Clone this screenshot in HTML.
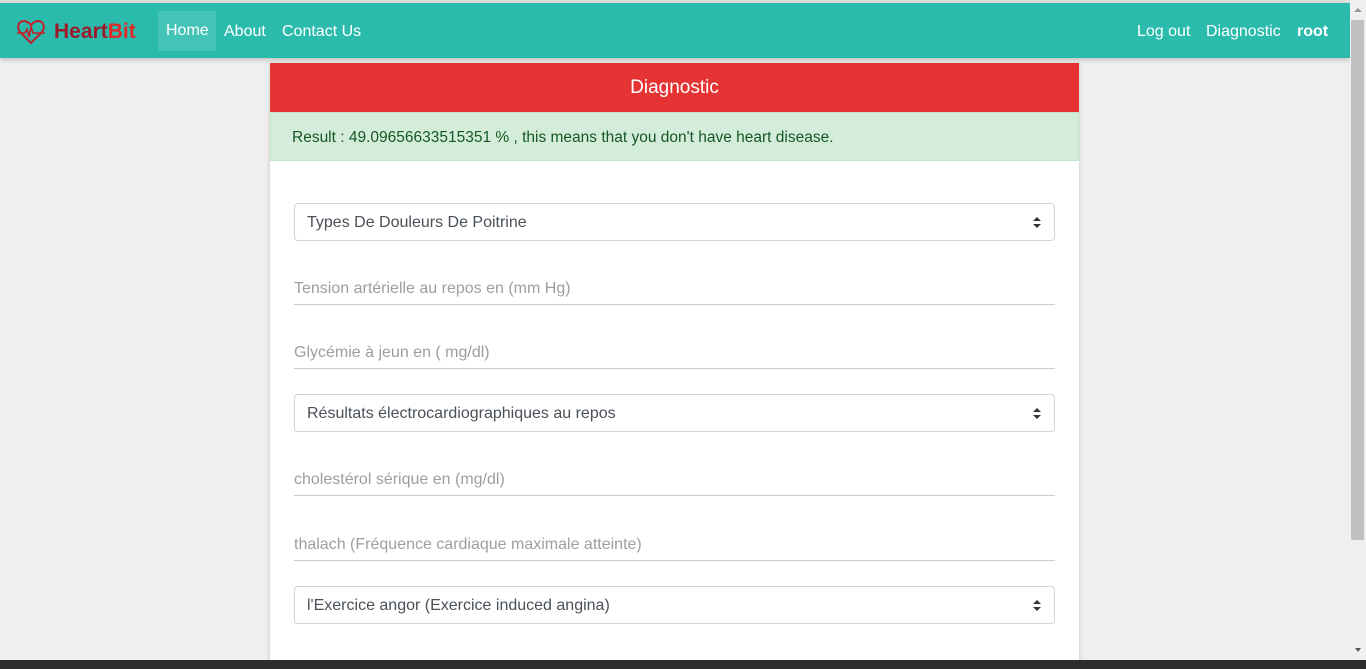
<!DOCTYPE html>
<html><head><meta charset="utf-8">
<style>
*{box-sizing:border-box;margin:0;padding:0}
body{width:1366px;height:669px;overflow:hidden;background:#efefef;font-family:"Liberation Sans",sans-serif;position:relative}
.top{position:absolute;left:0;top:0;width:1350px;height:3px;background:#e0e0e0}
.nav{position:absolute;left:0;top:3px;width:1350px;height:55px;background:#2bbbad;box-shadow:0 2px 5px rgba(0,0,0,.2);color:#fff;font-size:16px}
.nav .brand{position:absolute;left:16px;top:16px;display:flex;align-items:center;color:#9b1b2a;font-weight:bold;font-size:21px}
.nav a{position:absolute;top:1px;height:55px;line-height:55px;color:#fff}
.home{left:158px;width:58px;top:8px!important;height:40px!important;line-height:40px!important;background:rgba(255,255,255,.12);padding-left:8px}
.sb{position:absolute;left:1350px;top:0;width:16px;height:660px;background:#f0f0f0}
.thumb{position:absolute;left:1351px;top:20px;width:13px;height:520px;background:#c1c1c1}
.task{position:absolute;left:0;top:660px;width:1366px;height:9px;background:#2d2d2d}
.card{position:absolute;left:270px;top:63px;width:809px;height:600px;background:#fff;box-shadow:0 2px 5px rgba(0,0,0,.16)}
.head{height:49px;background:#e53334;color:#fff;text-align:center;font-size:19px;line-height:50px}
.res{height:49px;background:#d4edda;border:1px solid #c3e6cb;color:#155724;font-size:15.5px;line-height:49px;padding-left:21px}
.sel{position:absolute;left:24px;width:761px;height:38px;border:1px solid #ced4da;border-radius:4px;font-size:16px;color:#495057;line-height:37px;padding-left:12px}
.sel:after{content:"";position:absolute;right:13px;top:13px;border:4px solid transparent;border-bottom:4px solid #333;border-top:0}
.sel:before{content:"";position:absolute;right:13px;top:20px;border:4px solid transparent;border-top:4px solid #333;border-bottom:0}
.inp{position:absolute;left:24px;width:761px;height:30px;border-bottom:1px solid #ccc;font-size:16px;color:#9e9e9e;padding-top:5px}
</style></head><body>
<div class="top"></div>
<div class="nav">
 <div class="brand"><svg width="30" height="26" viewBox="0 0 30 26"><path d="M15 24 L5 14 C0 9 2 2 8 2 C11 2 13 4 15 6 C17 4 19 2 22 2 C28 2 30 9 25 14 Z" fill="none" stroke="#c0202a" stroke-width="2"/><path d="M1 14 H9 L11 10 L13 18 L15 8 L17 14 H29" fill="none" stroke="#c0202a" stroke-width="1.6"/></svg><span style="margin-left:8px">Heart<span style="color:#e02a2a">Bit</span></span></div>
 <a class="home">Home</a>
 <a style="left:224px">About</a>
 <a style="left:282px">Contact Us</a>
 <a style="left:1137px">Log out</a>
 <a style="left:1206px">Diagnostic</a>
 <a style="left:1297px;font-weight:bold">root</a>
</div>
<div class="sb"></div><div class="thumb"></div>
<div style="position:absolute;left:1354px;top:8px;border:4px solid transparent;border-bottom:4px solid #999;border-top:0"></div>
<div style="position:absolute;left:1355px;top:648px;border:3px solid transparent;border-top:4px solid #555;border-bottom:0"></div>
<div class="card">
 <div class="head">Diagnostic</div>
 <div class="res">Result : 49.09656633515351 % , this means that you don't have heart disease.</div>
 <div class="sel" style="top:140px">Types De Douleurs De Poitrine</div>
 <div class="inp" style="top:212px">Tension artérielle au repos en (mm Hg)</div>
 <div class="inp" style="top:276px">Glycémie à jeun en ( mg/dl)</div>
 <div class="sel" style="top:331px">Résultats électrocardiographiques au repos</div>
 <div class="inp" style="top:403px">cholestérol sérique en (mg/dl)</div>
 <div class="inp" style="top:468px">thalach (Fréquence cardiaque maximale atteinte)</div>
 <div class="sel" style="top:523px">l'Exercice angor (Exercice induced angina)</div>
</div>
<div class="task"></div>
</body></html>
